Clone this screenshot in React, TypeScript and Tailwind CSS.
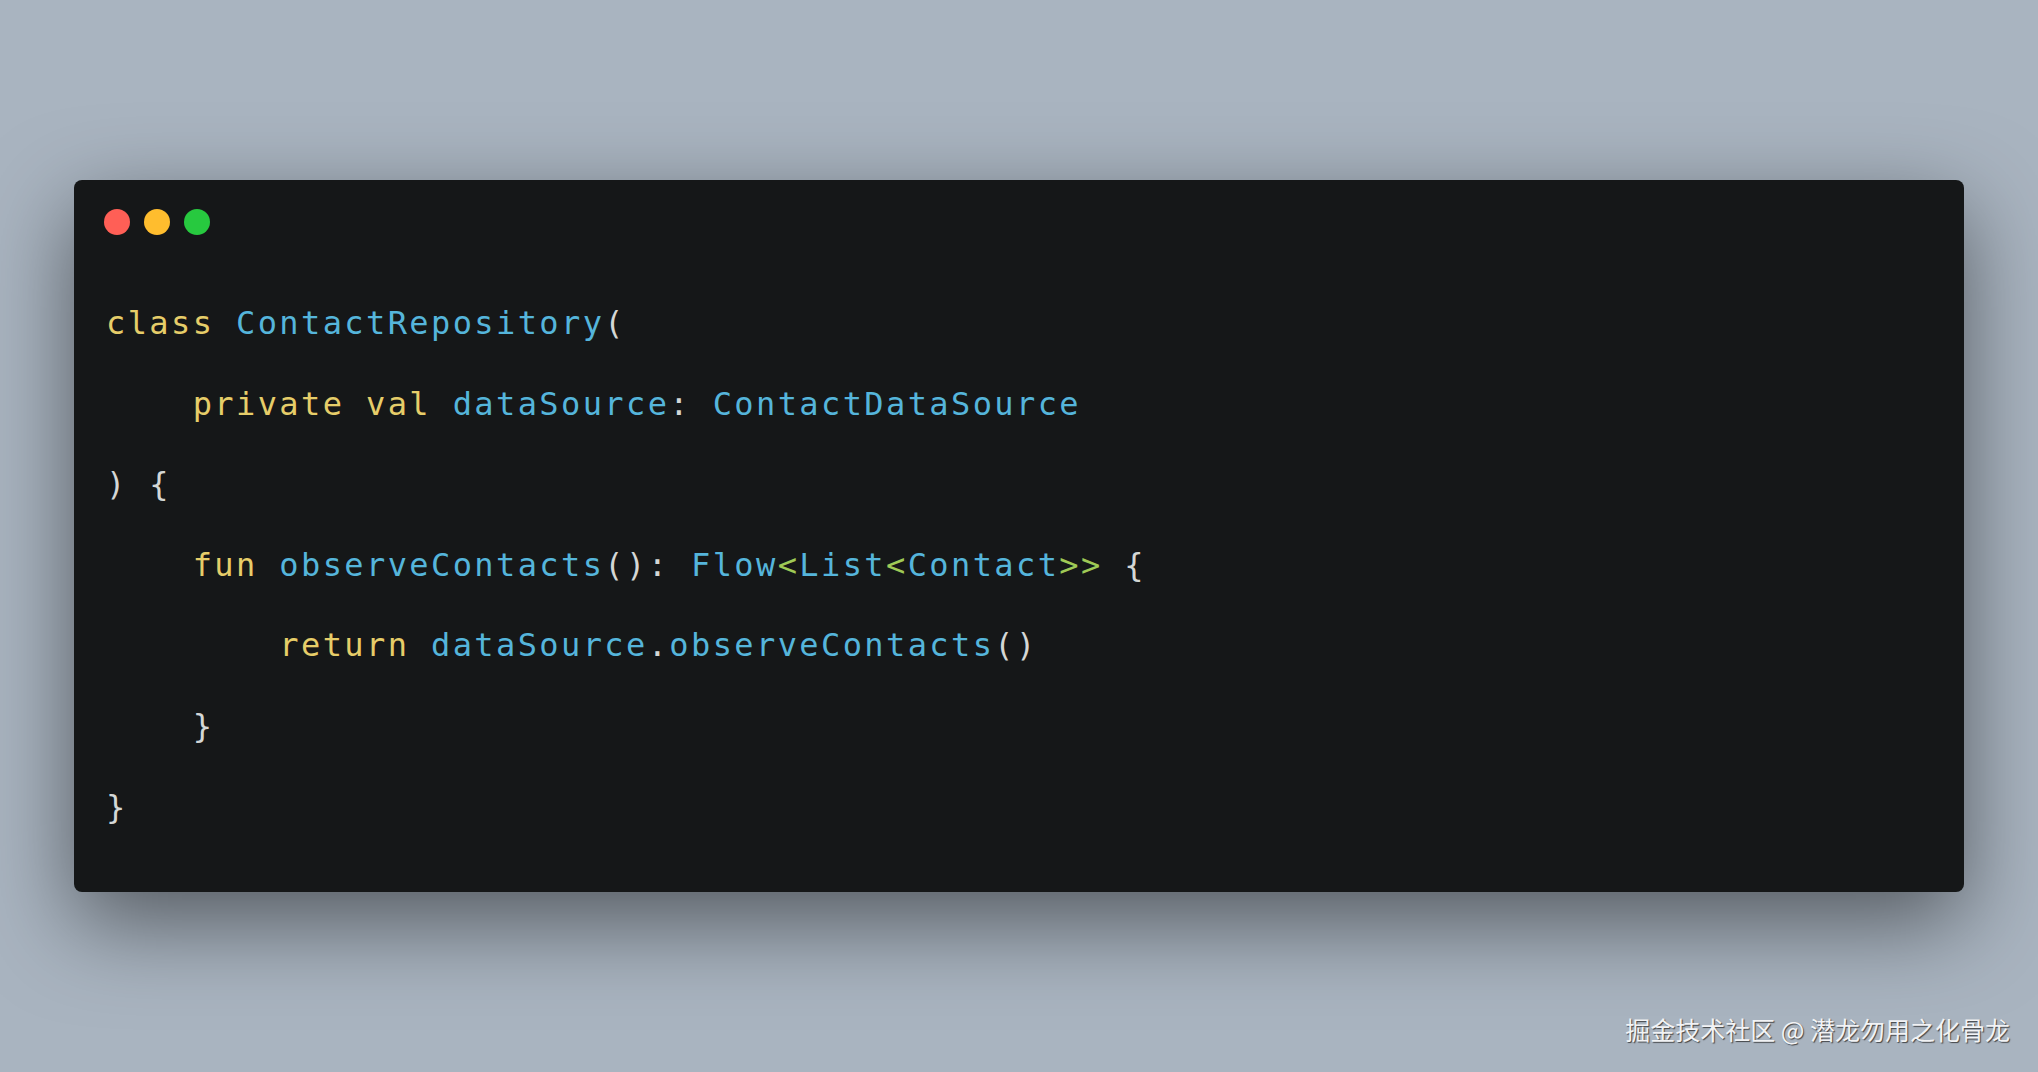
import React from 'react';

type Tok = [string, string];

const KW = 'text-[#e6cd69]';
const ID = 'text-[#55b5db]';
const GN = 'text-[#9fca56]';
const PL = 'text-[#d4d7d6]';

const lines: Tok[][] = [
  [['class ', KW], ['ContactRepository', ID], ['(', PL]],
  [['    private val ', KW], ['dataSource', ID], [': ', PL], ['ContactDataSource', ID]],
  [[') {', PL]],
  [
    ['    fun ', KW],
    ['observeContacts', ID],
    ['(): ', PL],
    ['Flow', ID],
    ['<', GN],
    ['List', ID],
    ['<', GN],
    ['Contact', ID],
    ['>>', GN],
    [' {', PL],
  ],
  [['        return ', KW], ['dataSource', ID], ['.', PL], ['observeContacts', ID], ['()', PL]],
  [['    }', PL]],
  [['}', PL]],
];

const App = () => {
  return (
    <div className="relative h-screen w-full bg-[#a9b4c0] flex items-center justify-center overflow-hidden">
      <div className="w-[1890px] h-[712px] rounded-[8px] bg-[#151718] shadow-[0_30px_90px_rgba(0,0,0,0.5)] px-[30px] pt-[29px] pb-[44px]">
        <div className="flex gap-[14px]">
          <span className="w-[26px] h-[26px] rounded-full bg-[#ff5f56]" />
          <span className="w-[26px] h-[26px] rounded-full bg-[#ffbd2e]" />
          <span className="w-[26px] h-[26px] rounded-full bg-[#27c93f]" />
        </div>

        <pre className="mt-[48px] pl-[2px] font-['DejaVu_Sans_Mono',monospace] text-[32px] leading-[80.6px] tracking-[2.4px]">
          {lines.map((line, i) => (
            <div key={i}>
              {line.map(([text, cls], j) => (
                <span key={j} className={cls}>
                  {text}
                </span>
              ))}
            </div>
          ))}
        </pre>
      </div>

      <div className="absolute right-[28px] bottom-[24px] text-[25px] text-[#f2f3f5] font-['Noto_Sans_CJK_SC',sans-serif] [text-shadow:1px_1px_1px_rgba(40,40,40,0.8)]">
        掘金技术社区 @ 潜龙勿用之化骨龙
      </div>
    </div>
  );
};

export default App;
